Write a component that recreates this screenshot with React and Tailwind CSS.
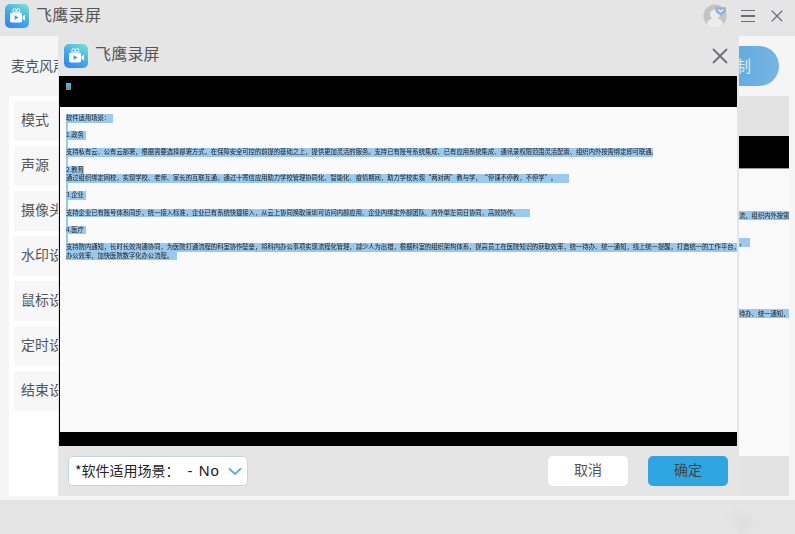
import React from "react";

const cjk = { fontFamily: '"Noto Sans CJK SC", "Liberation Sans", sans-serif' };

const sideItems = ["模式", "声源", "摄像头", "水印设置", "鼠标设置", "定时设置", "结束设置"];

// every line of the captured document, the widths follow the selection highlight
const docLines = [
  { text: "软件适用场景：", w: "w-[47px]" },
  { text: "", w: "w-[2px]" },
  { text: "1.政务", w: "w-[20px]" },
  { text: "", w: "w-[2px]" },
  {
    text: "支持私有云、公有云部署，根据需要选择部署方式，在保障安全可控的前提的基础之上，提供更加灵活的服务。支持已有账号系统集成、已有应用系统集成、通讯录权限范围灵活配置、组织内外按需绑定即可联通。",
    w: "w-[587px]",
  },
  { text: "", w: "w-[2px]" },
  { text: "2.教育", w: "w-[18px]" },
  {
    text: "通过组织绑定网校，实现学校、老师、家长的互联互通。通过十寄信应用助力学校管理协同化、智能化、疫情期间，助力学校实现“两对两”教与学，“停课不停教，不停学”。",
    w: "w-[503px]",
  },
  { text: "", w: "w-[2px]" },
  { text: "3.企业", w: "w-[20px]" },
  { text: "", w: "w-[2px]" },
  {
    text: "支持企业已有账号体系同步，统一接入标准，企业已有系统快捷接入，从云上协同换取深圳可访问内部应用、企业内绑定外部团队、内外单左同日协同，高效协作。",
    w: "w-[464px]",
  },
  { text: "", w: "w-[2px]" },
  { text: "4.医疗", w: "w-[20px]" },
  { text: "", w: "w-[2px]" },
  {
    text: "支持院内通知，长时长效沟通协同，为医院打通流程的科室协作壁垒，将科内办公事项实现流程化管理，减少人为出错，根据科室的组织架构体系，提高员工在医院知识的获取效率，统一待办、统一通知，线上统一提醒，打造统一的工作平台，提高医院整",
    w: "w-[671px]",
  },
  { text: "办公效率，加快医院数字化办公流程。", w: "w-[111px]" },
];

function Logo() {
  return (
    <svg width="24" height="24" viewBox="0 0 24 24" className="shrink-0">
      <defs>
        <linearGradient id="logoGrad" x1="0.8" y1="0" x2="0.2" y2="1">
          <stop offset="0" stopColor="#6fe0d0" />
          <stop offset="0.55" stopColor="#3fa8f0" />
          <stop offset="1" stopColor="#2f86f5" />
        </linearGradient>
      </defs>
      <rect width="24" height="24" rx="5" fill="url(#logoGrad)" />
      <circle cx="9.5" cy="6.4" r="1.7" fill="none" stroke="#fff" strokeWidth="1" />
      <circle cx="13.2" cy="6.4" r="1.7" fill="none" stroke="#fff" strokeWidth="1" />
      <rect x="5" y="8.5" width="12" height="10" rx="1.8" fill="#fff" />
      <path d="M17.6 12.2l2.4-1.4v5.6l-2.4-1.4z" fill="#fff" />
      <path d="M9.6 11.2l4 2.4-4 2.4z" fill="#3f9cf0" />
    </svg>
  );
}

function CloseIcon({ size, color, sw }) {
  return (
    <svg width={size} height={size} viewBox="0 0 16 16">
      <path d="M1 1l14 14M15 1L1 15" stroke={color} strokeWidth={sw} fill="none" />
    </svg>
  );
}

function Avatar() {
  return (
    <svg width="24" height="24" viewBox="0 0 24 24">
      <circle cx="12" cy="12" r="11.6" fill="#c4c4c4" />
      <circle cx="12" cy="10.5" r="5" fill="#ececec" />
      <path d="M3.5 20c1.5-4.5 5-5.6 8.500-5.600s7 1.100 8.500 5.600a11.600 11.600 0 0 1-17 0z" fill="#ececec" />
      <path d="M12.500 3.200h10.500v4.500l-5.250 4-5.250-4z" fill="#8fb2d6" />
      <path d="M15.200 5.400l2.550 2.300 2.550-2.300" stroke="#fff" strokeWidth="1.200" fill="none" />
    </svg>
  );
}

function Chevron() {
  return (
    <svg width="14" height="9" viewBox="0 0 14 9">
      <path d="M1 1.500l6 5.500 6-5.500" stroke="#5aaae6" strokeWidth="1.800" fill="none" />
    </svg>
  );
}

export default function App() {
  return (
    <div
      className="relative w-[795px] h-[534px] overflow-hidden flex flex-col bg-[#f5f5f5] text-[#555]"
      style={cjk}
    >
      {/* Title bar */}
      <div className="h-9 shrink-0 bg-[#e5e5e5] flex items-start pt-1 pl-[5px]">
        <Logo />
        <span className="ml-[7px] text-base leading-5 tracking-[0.3px]">飞鹰录屏</span>
        <div className="ml-auto h-6 flex items-center">
          <Avatar />
          <div className="ml-[14px] w-[14px] flex flex-col gap-1">
            <div className="h-[1.500px] bg-[#6b6f7a]" />
            <div className="h-[1.500px] bg-[#6b6f7a]" />
            <div className="h-[1.500px] bg-[#6b6f7a]" />
          </div>
          <div className="ml-4 mr-3 flex">
            <CloseIcon size={12} color="#666a75" sw={1.500} />
          </div>
        </div>
      </div>

      {/* Page behind the dialog */}
      <div className="h-[60px] shrink-0 flex items-center justify-between pl-[11px] pr-4">
        <span className="text-sm pb-[3px]">麦克风声音</span>
        <div className="w-[90px] h-10 rounded-full bg-gradient-to-r from-[#4f9fdb] to-[#74b6e3] flex items-center justify-end pr-7 pb-[3px] text-base text-[#d8ebf8] whitespace-nowrap">
          开始录制
        </div>
      </div>
      <div className="h-[400px] shrink-0 ml-[9px] mr-[6px] bg-white flex">
        <div className="w-[49px] shrink-0 pl-[5px] pt-[5px] flex flex-col gap-[5px] overflow-hidden">
          {sideItems.map((item) => (
            <div
              key={item}
              className="h-10 w-[60px] shrink-0 bg-[#f7f7f7] flex items-center pl-[7px] pb-1 text-sm whitespace-nowrap"
            >
              {item}
            </div>
          ))}
        </div>
        <div className="flex-1 flex flex-col">
          <div className="h-10 bg-[#e3e3e3]" />
          <div className="h-8 bg-black" />
          <div className="h-px bg-[#9a9a9a]" />
          <div className="flex-1 bg-[#f9f9f9] flex flex-col items-end text-[6.300px] leading-[9px] text-[#222] blur-[0.3px]">
            <div className="mt-[42px] w-[50px] h-[9px] bg-[#99c9ee] whitespace-nowrap overflow-hidden">
              流，组织内外按需绑定
            </div>
            <div className="mt-[18px] w-[50px] h-[9px]">
              <div className="w-[11px] h-[9px] bg-[#99c9ee]">，</div>
            </div>
            <div className="mt-[62px] w-[50px] h-[9px] bg-[#99c9ee] whitespace-nowrap overflow-hidden">
              待办、统一通知，线
            </div>
          </div>
          <div className="h-10 bg-[#e3e3e3]" />
        </div>
      </div>
      <div className="mt-[4px] flex-1 bg-[#e5e5e5] flex justify-end items-end pr-[42px] pb-[2px]">
        <div className="w-5 h-5 rounded-full bg-[#dedede] blur-[4px]" />
      </div>

      {/* Dialog */}
      <div className="absolute left-[58px] top-9 w-[681px] h-[460px] bg-[#e5e5e5] flex flex-col">
        <div className="h-10 shrink-0 flex items-center pl-[6px] pr-[11px]">
          <Logo />
          <span className="ml-[7px] text-base pb-[7px] tracking-[0.2px]">飞鹰录屏</span>
          <div className="ml-auto flex">
            <CloseIcon size={16} color="#6d7079" sw={1.800} />
          </div>
        </div>
        <div className="h-[370px] shrink-0 ml-px mr-[2px] flex flex-col bg-[#fafafa]">
          <div className="h-[31px] shrink-0 bg-black pl-[7px] pt-[7px]">
            <div className="w-[5px] h-[7px] bg-gradient-to-b from-[#58c3e8] via-[#48a8d0] to-[#b0703c]" />
          </div>
          <div className="flex-1 border-l-[1px] border-black pl-[6px] pt-[7px] text-[6.300px] leading-[8.600px] text-[#222] blur-[0.3px]">
            {docLines.map((line, i) => (
              <div
                key={i}
                className={`${line.w} h-[8.600px] bg-[#99c9ee] whitespace-nowrap overflow-hidden`}
              >
                {line.text}
              </div>
            ))}
          </div>
          <div className="h-[14px] shrink-0 bg-black" />
        </div>
        <div className="flex-1 flex items-start pt-[10px] pl-[10px] pr-[11px]">
          <div className="w-[180px] h-[30px] bg-white border border-[#c4d6e6] rounded-[5px] flex items-center pl-[6px] pr-[5px] text-sm text-[#222]">
            <span className="whitespace-nowrap pb-[3px]">*软件适用场景：</span>
            <span className="ml-2 pb-[1px] whitespace-nowrap text-[15px] tracking-[1px] font-['Liberation_Sans',sans-serif]">
              - No
            </span>
            <div className="ml-auto flex">
              <Chevron />
            </div>
          </div>
          <button className="ml-auto w-20 h-[30px] pb-1 bg-white rounded-[5px] text-sm text-[#555]">取消</button>
          <button className="ml-5 w-20 h-[30px] pb-1 bg-[#2ea6e3] rounded-[5px] text-sm text-[#444]">确定</button>
        </div>
      </div>
    </div>
  );
}
